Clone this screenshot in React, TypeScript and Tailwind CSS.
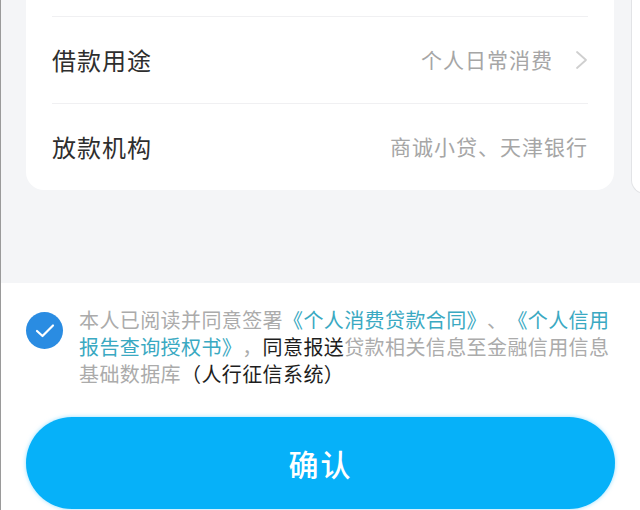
import React from "react";

const font = { fontFamily: '"Noto Sans CJK SC", "Noto Sans", sans-serif' };

const Row = ({ label, value, arrow }: { label: string; value: string; arrow?: boolean }) => (
  <div className="flex items-center justify-between h-[87px] border-t border-[#f0f0f2] mx-[26px]">
    <span className="text-[24px] text-[#2e2e2e] tracking-[1px]">{label}</span>
    <div className="flex items-center">
      <span className="text-[21px] text-[#a6a6a6] tracking-[1px]">{value}</span>
      {arrow && (
        <svg width="13" height="22" viewBox="0 0 13 22" className="ml-[22px]">
          <path d="M2 3 L11 11 L2 19" fill="none" stroke="#cfcfcf" strokeWidth="1.8" strokeLinecap="round" strokeLinejoin="round" />
        </svg>
      )}
    </div>
  </div>
);

const App = () => {
  return (
    <div className="w-[640px] h-[510px] overflow-hidden bg-white border-l border-[#9a9a9a] [text-spacing-trim:space-all]" style={font}>
      <div className="bg-[#f4f5f7] h-[283px] flex">
        <div className="ml-[25px] w-[588px] shrink-0 h-[190px] bg-white rounded-b-[18px] pt-[16px]">
          <Row label="借款用途" value="个人日常消费" arrow />
          <Row label="放款机构" value="商诚小贷、天津银行" />
        </div>
        <div className="ml-[17px] w-[20px] shrink-0 h-[194px] bg-white border-l border-b border-[#e2e3e6] rounded-bl-[14px]" />
      </div>

      <div className="flex items-start pt-[23px] pl-[25px]">
        <div className="mt-[6px] w-[37px] h-[37px] rounded-full bg-[#2a8ce2] flex items-center justify-center shrink-0">
          <svg width="20" height="16" viewBox="0 0 20 16">
            <path d="M2 8 L7.5 13 L18 2.5" fill="none" stroke="white" strokeWidth="2.2" strokeLinecap="round" strokeLinejoin="round" />
          </svg>
        </div>
        <p className="ml-[16px] text-[20px] leading-[27px] text-[#ababab] tracking-[0.4px] whitespace-nowrap">
          本人已阅读并同意签署<span className="text-[#3aa9c2]">《个人消费贷款合同》</span>、<span className="text-[#3aa9c2]">《个人信用</span>
          <br />
          <span className="text-[#3aa9c2]">报告查询授权书》</span>，<span className="text-[#1e1e1e]">同意报送</span>贷款相关信息至金融信用信息
          <br />
          基础数据库<span className="text-[#1e1e1e]">（人行征信系统）</span>
        </p>
      </div>

      <div className="mx-[25px] mt-[30px] h-[92px] rounded-full bg-[#06b1f9] shadow-[0_0_4px_rgba(80,200,255,0.6)] flex items-center justify-center">
        <span className="text-white text-[30px] font-medium tracking-[2px]">确认</span>
      </div>
    </div>
  );
};

export default App;
